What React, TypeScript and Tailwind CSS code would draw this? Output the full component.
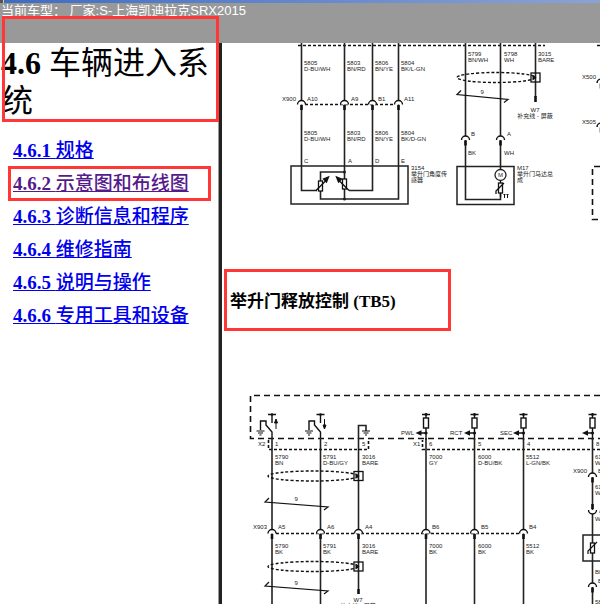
import type { ReactNode } from 'react';

interface Chapter {
  id: string;
  title: string;
  visited?: boolean;
  marked?: boolean;
}

const CHAPTERS: Chapter[] = [
  { id: '4.6.1', title: '规格' },
  { id: '4.6.2', title: '示意图和布线图', visited: true, marked: true },
  { id: '4.6.3', title: '诊断信息和程序' },
  { id: '4.6.4', title: '维修指南' },
  { id: '4.6.5', title: '说明与操作' },
  { id: '4.6.6', title: '专用工具和设备' },
];

function Wire({ d }: { d: string }) {
  return <path d={d} stroke="#222" strokeWidth={1.6} fill="none" />;
}

function Dashes({ d, long }: { d: string; long?: boolean }) {
  return (
    <path
      d={d}
      stroke="#111"
      strokeWidth={1.6}
      strokeDasharray={long ? '6 4' : '3 2'}
      fill="none"
    />
  );
}

// Label with one line of text per entry
function Label({ x, y, lines }: { x: number; y: number; lines: string[] }) {
  return (
    <text x={x} y={y}>
      {lines.map((line, i) => (
        <tspan key={i} x={x} dy={i === 0 ? 0 : 6}>
          {line}
        </tspan>
      ))}
    </text>
  );
}

// Inline connector: socket arc on top, pin below
function Connector({ x, y }: { x: number; y: number }) {
  return (
    <g>
      <path d={`M${x - 4} ${y + 4}a4 4 0 0 1 8 0`} stroke="#111" strokeWidth={1.4} fill="#fff" />
      <path d={`M${x} ${y + 4.5}v5`} stroke="#111" strokeWidth={2.6} />
    </g>
  );
}

function InvertedConnector({ x, y }: { x: number; y: number }) {
  return (
    <g>
      <path d={`M${x - 4} ${y}a4 4 0 0 0 8 0`} stroke="#111" strokeWidth={1.4} fill="#fff" />
      <path d={`M${x} ${y - 6}v5`} stroke="#111" strokeWidth={2.6} />
    </g>
  );
}

// Twisted pair shield with its drain box
function Shield({ cx, cy, rx, boxX }: { cx: number; cy: number; rx: number; boxX: number }) {
  return (
    <g stroke="#111" fill="none">
      <ellipse cx={cx} cy={cy} rx={rx} ry={5} strokeWidth={1.4} strokeDasharray="3 2" />
      <rect x={boxX - 4.5} y={cy - 4.5} width={9} height={9} strokeWidth={1.3} />
      <path d={`M${boxX - 3} ${cy - 3}l4 3l-4 3z`} fill="#111" stroke="none" />
    </g>
  );
}

function TwistMark({ x1, x2, y }: { x1: number; x2: number; y: number }) {
  return (
    <g>
      <path
        d={`M${x1 + 4} ${y - 4}L${x1} ${y}L${x2} ${y + 5}L${x2 - 4} ${y + 8}`}
        stroke="#111"
        strokeWidth={1.2}
        fill="none"
      />
      <text x={(x1 + x2) / 2 - 2} y={y - 1}>9</text>
    </g>
  );
}

function Ground({ x, y }: { x: number; y: number }) {
  return (
    <path
      d={`M${x - 4} ${y}h8M${x - 2.5} ${y + 2}h5M${x - 1} ${y + 4}h2`}
      stroke="#111"
      strokeWidth={1.2}
    />
  );
}

function Switch({ x, up }: { x: number; up?: boolean }) {
  return (
    <g stroke="#111" strokeWidth={1.4} fill="none">
      <path d={`M${x - 4} 414.5h8M${x} 414v9M${x} 439v-7l-6 -7v-4h-5.5v9`} />
      <circle cx={x} cy={414.5} r={1.3} fill="#111" stroke="none" />
      <Ground x={x - 11.5} y={431} />
      {up ? (
        <path d={`M${x + 4} 429v-6m-1.5 0h3l-1.5 -4z`} fill="#111" strokeWidth={1} />
      ) : (
        <path d={`M${x + 4} 419v6m-1.5 0h3l-1.5 4z`} fill="#111" strokeWidth={1} />
      )}
    </g>
  );
}

function Resistor({ x }: { x: number }) {
  return (
    <g stroke="#111" strokeWidth={1.4} fill="none">
      <path d={`M${x - 4} 414.5h8M${x} 414v4M${x} 428v12M${x} 433h-5`} />
      <rect x={x - 2.5} y={418} width={5} height={10} />
      <path d={`M${x - 10.5} 433l6 -2.8v5.6z`} fill="#111" stroke="none" />
      <circle cx={x} cy={414.5} r={1.4} fill="#111" stroke="none" />
      <circle cx={x} cy={433} r={1.6} fill="#111" stroke="none" />
    </g>
  );
}

function Diagram({ viewBox, title, className, children }: {
  viewBox: string;
  title: string;
  className: string;
  children: ReactNode;
}) {
  return (
    <svg
      viewBox={viewBox}
      role="img"
      aria-label={title}
      className={className}
      fill="#222"
      fontSize={6}
      fontFamily='"Liberation Sans", "Noto Sans CJK SC", sans-serif'
    >
      {children}
    </svg>
  );
}

function SensorDiagram() {
  return (
    <Diagram viewBox="222 43 478 187" title="举升门角度传感器" className="block h-[187px] w-[478px] shrink-0">
      <Dashes d="M298 45.5H545" />
      <Dashes d="M597 45.5H700" />
      <Wire d="M301.5 43V190.5H317" />
      <Wire d="M344.5 43V199" />
      <Wire d="M372.5 43V190.5H349" />
      <Wire d="M398.5 43V199H320.5V172H344.5" />
      <Dashes d="M305 104.5H395" />
      {[301.5, 344.5, 372.5, 398.5].map((x) => (
        <Connector key={x} x={x} y={100.5} />
      ))}
      <rect x={291} y={166} width={117} height={38} stroke="#222" strokeWidth={1.5} fill="none" />
      <g stroke="#111" strokeWidth={1.3} fill="#fff">
        <rect x={318.5} y={181} width={4} height={10} />
        <rect x={342.5} y={179} width={4} height={10} />
        <path d="M316 190.5l11 -11M349 190.5l-11 -11" />
        <path d="M328.5 177l-2 5l-3 -3zM336.5 177l2 5l3 -3z" fill="#111" />
      </g>
      <circle cx={344.5} cy={172} r={1.5} />
      <circle cx={344.5} cy={199} r={1.5} />
      <Label x={304} y={65} lines={['5805', 'D-BU/WH']} />
      <Label x={347} y={65} lines={['5803', 'BN/RD']} />
      <Label x={375} y={65} lines={['5806', 'BN/YE']} />
      <Label x={401} y={65} lines={['5804', 'BK/L-GN']} />
      <text x={282} y={101}>X900</text>
      <text x={307} y={101}>A10</text>
      <text x={351} y={101}>A9</text>
      <text x={378} y={101}>B1</text>
      <text x={404} y={101}>A11</text>
      <Label x={304} y={135} lines={['5805', 'D-BU/WH']} />
      <Label x={347} y={135} lines={['5803', 'BN/RD']} />
      <Label x={375} y={135} lines={['5806', 'BN/YE']} />
      <Label x={401} y={135} lines={['5804', 'BK/D-GN']} />
      <text x={304} y={163}>C</text>
      <text x={348} y={163}>A</text>
      <text x={375} y={163}>D</text>
      <text x={401} y={163}>E</text>
      <Label x={411} y={170} lines={['3154', '举升门角度传', '感器']} />

      <Wire d="M465.5 43V199.5H500.5V193" />
      <Wire d="M500.5 43V170" />
      <Wire d="M535.5 43V97" />
      <path d="M535.5 96v6" stroke="#111" strokeWidth={2.6} />
      <Shield cx={496} cy={77.5} rx={39} boxX={535.5} />
      <TwistMark x1={457} x2={508} y={94.5} />
      <Connector x={465.5} y={136} />
      <Connector x={500.5} y={136} />
      <rect x={457} y={166.5} width={57} height={38} stroke="#222" strokeWidth={1.5} fill="none" />
      <circle cx={500.5} cy={175} r={5.5} stroke="#222" strokeWidth={1.3} fill="#fff" />
      <text x={500.5} y={177} textAnchor="middle">M</text>
      <g stroke="#111" strokeWidth={1.3} fill="none">
        <path d="M500.5 181v2M500.5 193v4M496 194v-3l8 -8" />
        <rect x={498.5} y={183} width={4} height={10} />
        <path d="M504.5 198v-4m-1 1l1 -1l1 1M507.5 198v-4m-1 1l1 -1l1 1" strokeWidth={1} />
      </g>
      <Label x={468} y={56} lines={['5799', 'BN/WH']} />
      <Label x={504} y={56} lines={['5798', 'WH']} />
      <Label x={538} y={56} lines={['3015', 'BARE']} />
      <text x={535} y={112} textAnchor="middle">W7</text>
      <text x={535} y={118} textAnchor="middle">补充线 - 屏蔽</text>
      <text x={471} y={136}>B</text>
      <text x={507} y={136}>A</text>
      <text x={468} y={155}>BK</text>
      <text x={504} y={155}>WH</text>
      <Label x={517} y={170} lines={['M17', '举升门马达总', '成']} />

      <text x={582} y={79}>X500</text>
      <text x={582} y={124}>X505</text>
      <Wire d="M601 50V166" />
      <Connector x={601} y={79} />
      <Connector x={601} y={123} />
      <Dashes long d="M700 166.5H592.5V219.5H700" />
    </Diagram>
  );
}

function ReleaseDiagram() {
  return (
    <Diagram viewBox="222 385 478 240" title="举升门释放控制" className="block h-[240px] w-[478px] shrink-0">
      <Dashes long d="M700 395.5H250.5V438.5H700" />
      <Switch x={272} up />
      <Switch x={320.5} />
      <Wire d="M358.5 439V425.5H366V431" />
      <Ground x={366} y={431} />
      <Dashes d="M268.5 440V449.5H368.5V440" />
      <Dashes d="M700 449.5H422.5V440" />
      <Wire d="M272 438V625" />
      <Wire d="M320.5 438V625" />
      <Wire d="M358.5 438V589" />
      <path d="M358.5 589v5" stroke="#111" strokeWidth={2.6} />
      {[426, 474.5, 523.5, 592.5].map((x) => (
        <Resistor key={x} x={x} />
      ))}
      <Wire d="M426 438V625" />
      <Wire d="M474.5 438V625" />
      <Wire d="M523.5 438V625" />
      <Wire d="M592.5 438V625" />
      <Dashes d="M276 533.5H520" />
      {[272, 320.5, 358.5, 426, 474.5, 523.5].map((x) => (
        <Connector key={x} x={x} y={529.5} />
      ))}
      <Shield cx={313} cy={476} rx={45} boxX={358.5} />
      <Shield cx={313} cy={566.5} rx={45} boxX={358.5} />
      <TwistMark x1={265} x2={328} y={502} />
      <TwistMark x1={265} x2={328} y={586} />
      <text x={401} y={435}>PWL</text>
      <text x={450} y={435}>RCT</text>
      <text x={500} y={435}>SEC</text>
      <text x={258} y={446}>X2</text>
      <text x={275} y={446}>1</text>
      <text x={324} y={446}>2</text>
      <text x={362} y={446}>5</text>
      <text x={413} y={446}>X1</text>
      <text x={429} y={446}>6</text>
      <text x={478} y={446}>5</text>
      <text x={527} y={446}>4</text>
      <text x={596} y={446}>8</text>
      <Label x={275} y={459} lines={['5790', 'BN']} />
      <Label x={323} y={459} lines={['5791', 'D-BU/GY']} />
      <Label x={362} y={459} lines={['3016', 'BARE']} />
      <Label x={429} y={459} lines={['7000', 'GY']} />
      <Label x={478} y={459} lines={['6000', 'D-BU/BK']} />
      <Label x={526} y={459} lines={['5512', 'L-GN/BK']} />
      <Label x={595} y={459} lines={['6119', 'WH']} />
      <text x={253} y={529}>X903</text>
      <text x={278} y={529}>A5</text>
      <text x={327} y={529}>A6</text>
      <text x={365} y={529}>A4</text>
      <text x={432} y={529}>B6</text>
      <text x={481} y={529}>B5</text>
      <text x={529} y={529}>B4</text>
      <Label x={275} y={548} lines={['5790', 'BK']} />
      <Label x={323} y={548} lines={['5791', 'BK']} />
      <Label x={362} y={548} lines={['3016', 'BARE']} />
      <Label x={429} y={548} lines={['7000', 'BK']} />
      <Label x={478} y={548} lines={['6000', 'BK']} />
      <Label x={526} y={548} lines={['5512', 'BK']} />
      <text x={358} y={602} textAnchor="middle">W7</text>
      <text x={358} y={608} textAnchor="middle">补充线 - 屏蔽</text>

      <text x={573} y={473}>X900</text>
      <Connector x={592.5} y={473} />
      <InvertedConnector x={592.5} y={510} />
      <Connector x={592.5} y={583} />
      <text x={598} y={473}>B2</text>
      <Label x={595} y={489} lines={['6119', 'WH']} />
      <text x={599} y={513}>A</text>
      <text x={595} y={521}>WH</text>
      <rect x={583} y={535} width={40} height={26} stroke="#222" strokeWidth={1.5} fill="none" />
      <rect x={590.5} y={543} width={4} height={10} stroke="#111" strokeWidth={1.3} fill="#fff" />
      <path d="M588 554v-3l9 -9" stroke="#111" strokeWidth={1.2} fill="none" />
      <text x={595} y={574}>BK</text>
      <text x={598} y={583}>B</text>
      <text x={595} y={604}>5812</text>
    </Diagram>
  );
}

export default function App() {
  return (
    <div className="relative flex h-screen flex-col overflow-hidden bg-white font-['Liberation_Serif','Noto_Sans_CJK_SC',serif] text-black">
      <header className="h-[43px] shrink-0 bg-[#999999] font-['Liberation_Sans','Noto_Sans_CJK_SC',sans-serif] text-[13px] leading-4 text-white">
        <div className="flex h-[3px] bg-linear-to-r from-[#3f6cc0] to-[#8aa3d6]">
          <span className="w-1 border-r border-[#cccccc] bg-[#555555]" />
        </div>
        <p className="pl-px">当前车型： 厂家:S-上海凯迪拉克SRX2015</p>
      </header>

      <div className="flex min-h-0 flex-1">
        <nav className="w-[219px] shrink-0 overflow-hidden border-r border-[#999999]">
          <h1 className="pt-px pl-px text-[32px] leading-[38px] font-bold">
            4.6 <span className="font-normal">车辆进入系统</span>
          </h1>
          <ul className="mt-3.5 pl-2">
            {CHAPTERS.map((chapter) => (
              <li key={chapter.id} className="flex h-[33px] items-center">
                <a
                  href={`#${chapter.id}`}
                  className={`relative pl-[5px] text-[19px] leading-6 font-bold underline ${
                    chapter.visited ? 'text-[#551a8b]' : 'text-[#0000ee]'
                  }`}
                >
                  {chapter.id} <span className="font-medium">{chapter.title}</span>
                  {chapter.marked && (
                    <span className="absolute -top-1.5 left-0 h-[35px] w-[203px] border-3 border-[#ff3737]" />
                  )}
                </a>
              </li>
            ))}
          </ul>
        </nav>

        <main className="flex min-w-0 flex-1 flex-col overflow-hidden border-l-3 border-[#222222]">
          <SensorDiagram />
          <h2 className="relative mt-[39px] h-[62px] w-[227px] shrink-0 pl-2 text-[17px] leading-[66px] font-bold">
            举升门释放控制 (TB5)
            <span className="absolute inset-y-0 left-0.5 w-full border-3 border-[#ff3737]" />
          </h2>
          <div className="mt-[54px]">
            <ReleaseDiagram />
          </div>
        </main>
      </div>

      <span className="absolute top-4 left-0.5 h-[106px] w-[217px] border-3 border-[#ff3737]" />
    </div>
  );
}
